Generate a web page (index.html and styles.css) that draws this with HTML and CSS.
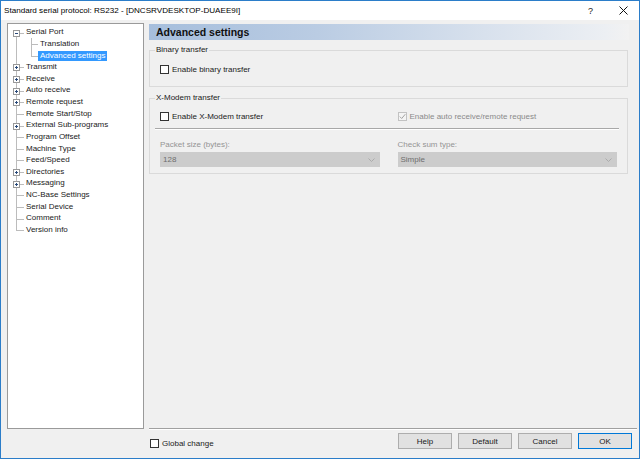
FILE: index.html
```html
<!DOCTYPE html>
<html>
<head>
<meta charset="utf-8">
<link rel="stylesheet" href="styles.css">
</head>
<body>
<div class="window">
  <div class="titlebar">
    <span class="title">Standard serial protocol: RS232 - [DNCSRVDESKTOP-DUAEE9I]</span>
    <span class="qmark">?</span>
    <svg class="close" width="9" height="9" viewBox="0 0 9 9"><path d="M0.5 0.5 L8.5 8.5 M8.5 0.5 L0.5 8.5" stroke="#111" stroke-width="1" fill="none"/></svg>
  </div>
  <div class="client">
    <div class="tree">
      <ul>
        <li class="node first"><span class="tw"><span class="exp minus"></span></span><span class="lbl">Serial Port</span></li>
        <li class="node"><span class="tw pass"></span><span class="tw2 cfirst"></span><span class="lbl">Translation</span></li>
        <li class="node"><span class="tw pass"></span><span class="tw2 clast"></span><span class="lbl sel">Advanced settings</span></li>
        <li class="node"><span class="tw"><span class="exp plus"></span></span><span class="lbl">Transmit</span></li>
        <li class="node"><span class="tw"><span class="exp plus"></span></span><span class="lbl">Receive</span></li>
        <li class="node"><span class="tw"><span class="exp plus"></span></span><span class="lbl">Auto receive</span></li>
        <li class="node"><span class="tw"><span class="exp plus"></span></span><span class="lbl">Remote request</span></li>
        <li class="node"><span class="tw"></span><span class="lbl">Remote Start/Stop</span></li>
        <li class="node"><span class="tw"><span class="exp plus"></span></span><span class="lbl">External Sub-programs</span></li>
        <li class="node"><span class="tw"></span><span class="lbl">Program Offset</span></li>
        <li class="node"><span class="tw"></span><span class="lbl">Machine Type</span></li>
        <li class="node"><span class="tw"></span><span class="lbl">Feed/Speed</span></li>
        <li class="node"><span class="tw"><span class="exp plus"></span></span><span class="lbl">Directories</span></li>
        <li class="node"><span class="tw"><span class="exp plus"></span></span><span class="lbl">Messaging</span></li>
        <li class="node"><span class="tw"></span><span class="lbl">NC-Base Settings</span></li>
        <li class="node"><span class="tw"></span><span class="lbl">Serial Device</span></li>
        <li class="node"><span class="tw"></span><span class="lbl">Comment</span></li>
        <li class="node last"><span class="tw"></span><span class="lbl">Version info</span></li>
      </ul>
    </div>
    <div class="content">
      <div class="header">Advanced settings</div>
      <fieldset class="group g1">
        <legend>Binary transfer</legend>
        <div class="check row1"><span class="box"></span><span>Enable binary transfer</span></div>
      </fieldset>
      <fieldset class="group g2">
        <legend>X-Modem transfer</legend>
        <div class="two row2">
          <div class="check"><span class="box"></span><span>Enable X-Modem transfer</span></div>
          <div class="check disabled"><span class="box"><svg width="7" height="7" viewBox="0 0 7 7"><path d="M0.8 3.6 L2.7 5.5 L6.3 1.2" stroke="#a3a3a3" stroke-width="1" fill="none"/></svg></span><span>Enable auto receive/remote request</span></div>
        </div>
        <div class="sep"></div>
        <div class="two fields">
          <div class="field">
            <div class="flabel">Packet size (bytes):</div>
            <div class="combo"><span>128</span><svg width="7" height="4" viewBox="0 0 7 4"><path d="M0.5 0.5 L3.5 3.5 L6.5 0.5" stroke="#ababab" stroke-width="1" fill="none"/></svg></div>
          </div>
          <div class="field">
            <div class="flabel">Check sum type:</div>
            <div class="combo"><span>Simple</span><svg width="7" height="4" viewBox="0 0 7 4"><path d="M0.5 0.5 L3.5 3.5 L6.5 0.5" stroke="#ababab" stroke-width="1" fill="none"/></svg></div>
          </div>
        </div>
      </fieldset>
    </div>
    <div class="footer">
      <div class="check global"><span class="box"></span><span>Global change</span></div>
      <div class="buttons">
        <div class="btn">Help</div>
        <div class="btn">Default</div>
        <div class="btn">Cancel</div>
        <div class="btn default">OK</div>
      </div>
    </div>
  </div>
</div>
</body>
</html>
```

FILE: styles.css
```css
html, body {
  margin: 0;
  padding: 0;
  background: #f0f0f0;
}

.window {
  width: 640px;
  height: 459px;
  box-sizing: border-box;
  border: 1px solid #2b7dc9;
  display: flex;
  flex-direction: column;
  background: #f0f0f0;
  font-family: "Liberation Sans", Arial, sans-serif;
  font-size: 8px;
  color: #1a1a1a;
}

.titlebar {
  height: 19px;
  flex: none;
  background: #fff;
  display: flex;
  align-items: center;
  padding-left: 3px;
}

.title {
  flex: 1;
  font-size: 8.1px;
  white-space: nowrap;
  color: #000;
}

.qmark {
  font-size: 9px;
  margin-right: 26px;
}

.close {
  margin-right: 11px;
}

.client {
  flex: 1;
  display: grid;
  grid-template-columns: 137px 1fr;
  grid-template-rows: 1fr 29px;
  column-gap: 5px;
  padding: 3px 2px 0 6px;
  min-height: 0;
}

/* tree */
.tree {
  grid-row: 1;
  grid-column: 1;
  background: #fff;
  border: 1px solid #9a9a9a;
  padding-top: 2.5px;
  overflow: hidden;
}

.tree ul {
  list-style: none;
  margin: 0;
  padding: 0;
}

.node {
  display: flex;
  align-items: center;
  height: 11.63px;
}

.lbl {
  line-height: 10px;
  padding: 0 2px;
  white-space: nowrap;
}

.lbl.sel {
  background: #3399ff;
  color: #fff;
}

.tw {
  position: relative;
  width: 16px;
  height: 100%;
  flex: none;
}

.tw::before {
  content: "";
  position: absolute;
  left: 8px;
  top: 0;
  bottom: 0;
  border-left: 1px solid #bcbcbc;
}

.tw::after {
  content: "";
  position: absolute;
  left: 8px;
  right: 0;
  top: 6px;
  border-top: 1px solid #bcbcbc;
}

.tw.pass::after {
  display: none;
}

.first .tw::before {
  top: 6px;
}

.last .tw::before {
  bottom: auto;
  height: 6px;
}

.tw2 {
  position: relative;
  width: 14px;
  height: 100%;
  flex: none;
}

.tw2::before {
  content: "";
  position: absolute;
  left: 7px;
  top: 0;
  bottom: 0;
  border-left: 1px solid #bcbcbc;
}

.tw2::after {
  content: "";
  position: absolute;
  left: 7px;
  right: 0;
  top: 6px;
  border-top: 1px solid #bcbcbc;
}

.tw2.clast::before {
  bottom: auto;
  height: 6px;
}

.exp {
  position: absolute;
  left: 5px;
  top: 3px;
  width: 7px;
  height: 7px;
  box-sizing: border-box;
  border: 1px solid #999;
  background: #fff;
  z-index: 1;
}

.exp::before {
  content: "";
  position: absolute;
  left: 1px;
  top: 2px;
  width: 3px;
  height: 1px;
  background: #2a4a7a;
}

.exp.plus::after {
  content: "";
  position: absolute;
  left: 2px;
  top: 1px;
  width: 1px;
  height: 3px;
  background: #2a4a7a;
}

/* content */
.content {
  grid-row: 1;
  grid-column: 2;
  display: flex;
  flex-direction: column;
  border-bottom: 1px solid #a0a0a0;
  box-shadow: 0 1px 0 #ffffff;
}

.header {
  height: 16px;
  margin: 1px 8px 0 0;
  padding-left: 7px;
  font-weight: bold;
  font-size: 10.5px;
  line-height: 16px;
  color: #111;
  background: linear-gradient(to right, #a6bedc 0%, #bacce3 35%, #d8e1ed 70%, #eceff3 95%, #f2f2f2 100%);
}

.group {
  margin: 0 9px 0 0;
  padding: 0 10px;
  border: 1px solid #dadada;
  min-width: 0;
}

.group legend {
  padding: 0 1px;
  margin-left: -5px;
  line-height: 10px;
}

.g1 {
  margin-top: 5px;
  padding-bottom: 12px;
}

.g2 {
  margin-top: 6px;
  padding-bottom: 6px;
}

.check {
  display: flex;
  align-items: center;
  height: 10px;
  white-space: nowrap;
}

.box {
  width: 9px;
  height: 9px;
  box-sizing: border-box;
  border: 1px solid #333;
  background: #fff;
  margin-right: 3px;
  flex: none;
  display: flex;
  align-items: center;
  justify-content: center;
}

.check.disabled {
  color: #8a8a8a;
}

.check.disabled .box {
  border-color: #c2c2c2;
  background: #f4f4f4;
}

.row1 {
  margin-top: 9px;
}

.two {
  display: grid;
  grid-template-columns: 1fr 1fr;
  column-gap: 18px;
}

.row2 {
  margin-top: 8px;
}

.sep {
  margin: 7px -2px 0 -5px;
  height: 1px;
  background: #a8a8a8;
  border-bottom: 1px solid #fff;
}

.fields {
  margin-top: 10px;
}

.flabel {
  line-height: 10px;
  color: #949494;
}

.combo {
  margin-top: 2px;
  height: 15px;
  background: #cccccc;
  display: flex;
  align-items: center;
  justify-content: space-between;
  padding: 0 5px 0 3px;
  color: #6e6e6e;
}

/* footer */
.footer {
  grid-row: 2;
  grid-column: 2;
  display: flex;
  align-items: flex-start;
  padding: 4px 5px 0 1px;
}

.global {
  margin-top: 5px;
}

.buttons {
  margin-left: auto;
  display: flex;
  gap: 6px;
}

.btn {
  width: 54px;
  height: 16px;
  box-sizing: border-box;
  border: 1px solid #adadad;
  background: #e1e1e1;
  display: flex;
  align-items: center;
  justify-content: center;
}

.btn.default {
  border-color: #0078d7;
}
```
